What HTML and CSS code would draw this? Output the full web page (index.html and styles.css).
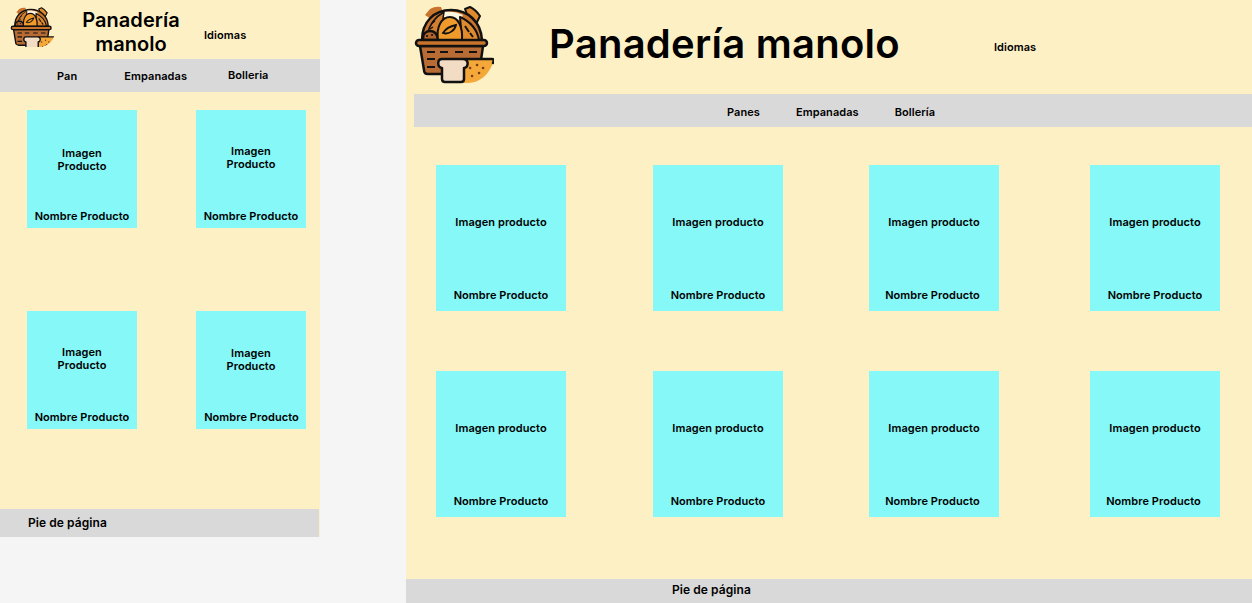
FILE: index.html
```html
<!DOCTYPE html>
<html lang="es">
<head>
    <meta charset="UTF-8">
    <title>Panadería manolo</title>
    <link rel="stylesheet" href="styles.css">
</head>
<body>
    <svg width="0" height="0">
        <symbol id="basket" viewBox="0 0 84 84">
            <path d="M15 13 L20 7 Q25 4 31 5 L34 13 L24 19Z" fill="#c9742c"/>
            <path d="M55 7 L60 5 Q66 8 70 14 L67 20 L60 20Z" fill="#e08a2e" stroke="#111" stroke-width="2" stroke-linejoin="round"/>
            <path d="M12 38 C12 20 24 8 41 8 C58 8 71 20 72 38Z" fill="#c9742c" stroke="#111" stroke-width="2.5"/>
            <path d="M34 10 C40 9 48 10 53 13 L50 18 L34 15Z" fill="#fff6e0"/>
            <path d="M17 33 C19 24 25 15 34 10 L30 36Z" fill="#d27f30" stroke="#111" stroke-width="1.5" stroke-linejoin="round"/>
            <path d="M21 22 L25 19 M20 27 L23 25" stroke="#111" stroke-width="1.5"/>
            <path d="M13 38 C12 32 16 29 20 29 C25 29 28 33 28 38Z" fill="#b5652b" stroke="#111" stroke-width="2.5"/>
            <path d="M17 34h.1M22 33h.1" stroke="#111" stroke-width="2" stroke-linecap="round"/>
            <path d="M50 15 C59 19 67 27 69 38 H52Z" fill="#e08a2e" stroke="#111" stroke-width="2" stroke-linejoin="round"/>
            <path d="M55 24 L59 30 M60 31 L63 35" stroke="#111" stroke-width="2"/>
            <path d="M28 38 C26 24 32 15 40 15 C48 15 53 25 52 38Z" fill="#f09a2c" stroke="#111" stroke-width="2"/>
            <path d="M33 31 C36 26 41 24 46 23 C45 28 39 33 33 31Z" fill="none" stroke="#111" stroke-width="1.8"/>
            <path d="M10 44 H73 L69 72 H18 C15 72 14 70 14 68Z" fill="#b86c34" stroke="#111" stroke-width="2.5" stroke-linejoin="round"/>
            <rect x="6" y="38" width="71" height="6" rx="3" fill="#c9742c" stroke="#111" stroke-width="2.5"/>
            <path d="M17 50 H25 M30 50 H38 M45 50 H53 M59 50 H67 M17 57 H25 M17 65 H25" stroke="#111" stroke-width="2.2"/>
            <path d="M55 57 H82 C84 57 84 59 83 61 C79 72 70 81 58 81 H50Z" fill="#f5a83a"/>
            <path d="M55 57 H82 C84 57 84 59 83 61" fill="none" stroke="#111" stroke-width="2.5" stroke-linecap="round"/>
            <path d="M60 66h.1M67 63h.1M73 66h.1M62 74h.1M69 71h.1" stroke="#7a3d12" stroke-width="2.5" stroke-linecap="round"/>
            <path d="M32 57 H53 C59 57 59 65 54 66 V77 C54 79 53 80 51 80 H35 C33 80 32 79 32 77 V66 C27 65 27 57 32 57Z" fill="#f2dcc4" stroke="#111" stroke-width="2.5" stroke-linejoin="round"/>
        </symbol>
    </svg>

    <div class="frame frame-mobile">
        <header class="top-mobile">
            <svg class="logo-mobile" viewBox="0 0 84 75"><use href="#basket" width="84" height="84"/></svg>
            <h1 class="title-mobile">Panadería manolo</h1>
            <span class="idiomas-mobile">Idiomas</span>
        </header>
        <nav class="nav-mobile">
            <a class="nav-pan">Pan</a>
            <a class="nav-emp">Empanadas</a>
            <a class="nav-bol">Bolleria</a>
        </nav>
        <main class="grid-mobile">
            <div class="card-mobile card-a"><p class="img-label">Imagen Producto</p><p class="name-label">Nombre Producto</p></div>
            <div class="card-mobile card-b"><p class="img-label">Imagen Producto</p><p class="name-label">Nombre Producto</p></div>
            <div class="card-mobile card-b"><p class="img-label">Imagen Producto</p><p class="name-label">Nombre Producto</p></div>
            <div class="card-mobile card-c"><p class="img-label">Imagen Producto</p><p class="name-label nudge-r">Nombre Producto</p></div>
        </main>
        <footer class="foot-mobile">Pie de página</footer>
    </div>

    <div class="frame frame-desktop">
        <header class="top-desktop">
            <svg class="logo-desktop"><use href="#basket"/></svg>
            <h1 class="title-desktop">Panadería manolo</h1>
            <span class="idiomas-desktop">Idiomas</span>
        </header>
        <nav class="nav-desktop">
            <a>Panes</a>
            <a>Empanadas</a>
            <a>Bollería</a>
        </nav>
        <main class="grid-desktop">
            <div class="card-desktop"><p class="img-label">Imagen producto</p><p class="name-label">Nombre Producto</p></div>
            <div class="card-desktop"><p class="img-label">Imagen producto</p><p class="name-label">Nombre Producto</p></div>
            <div class="card-desktop"><p class="img-label">Imagen producto</p><p class="name-label nudge-l">Nombre Producto</p></div>
            <div class="card-desktop"><p class="img-label">Imagen producto</p><p class="name-label">Nombre Producto</p></div>
            <div class="card-desktop"><p class="img-label">Imagen producto</p><p class="name-label">Nombre Producto</p></div>
            <div class="card-desktop"><p class="img-label">Imagen producto</p><p class="name-label">Nombre Producto</p></div>
            <div class="card-desktop"><p class="img-label">Imagen producto</p><p class="name-label nudge-l">Nombre Producto</p></div>
            <div class="card-desktop"><p class="img-label">Imagen producto</p><p class="name-label nudge-l">Nombre Producto</p></div>
        </main>
        <footer class="foot-desktop">Pie de página</footer>
    </div>
</body>
</html>
```

FILE: styles.css
```css
html, body {
    height: 100%;
}

body {
    font-family: Inter, Arial, sans-serif;
    font-weight: 600;
    letter-spacing: 0.07px;
    margin: 0;
    background-color: #f5f5f5;
    color: #000;
    display: flex;
    align-items: flex-start;
    overflow: hidden;
}

p, h1 {
    margin: 0;
}

.frame {
    background-color: #fef0c5;
    display: flex;
    flex-direction: column;
}

/* Telefono */
.frame-mobile {
    width: 320px;
    height: 537px;
    margin-right: 86px;
    flex-shrink: 0;
}

.top-mobile {
    height: 59px;
    display: flex;
    align-items: center;
    padding-left: 8px;
}

.logo-mobile {
    width: 47px;
    height: 42px;
    align-self: flex-start;
    margin-top: 5px;
    border-radius: 0 0 16px 16px;
    flex-shrink: 0;
}

.title-mobile {
    width: 110px;
    margin-left: 21px;
    margin-top: 4px;
    font-size: 20px;
    font-weight: 600;
    line-height: 24px;
    text-align: center;
}

.idiomas-mobile {
    font-size: 11px;
    margin-left: 18px;
    margin-top: 10px;
}

.nav-mobile {
    height: 33px;
    background-color: #d9d9d9;
    display: flex;
    align-items: center;
    font-size: 11px;
}

.nav-pan {
    margin-left: 57px;
}

.nav-emp {
    margin-left: 47px;
}

.nav-bol {
    margin-left: 41px;
    margin-bottom: 2px;
}

.grid-mobile {
    flex: 1;
    display: grid;
    grid-template-columns: 110px 110px;
    grid-auto-rows: 118px;
    column-gap: 59px;
    row-gap: 83px;
    padding: 18px 0 0 27px;
}

.card-mobile {
    background-color: #85f8f7;
    display: flex;
    flex-direction: column;
    align-items: center;
    text-align: center;
    font-size: 11px;
    line-height: 13px;
}

.card-mobile .img-label {
    width: 70px;
}

.card-a .img-label {
    margin-top: 37px;
}

.card-b .img-label {
    margin-top: 35px;
}

.card-c .img-label {
    margin-top: 36px;
}

.card-mobile .name-label {
    margin-top: auto;
    margin-bottom: 5px;
}

.foot-mobile {
    height: 28px;
    width: 319px;
    background-color: #d9d9d9;
    font-size: 12px;
    line-height: 28px;
    padding-left: 28px;
    box-sizing: border-box;
}

.nudge-r {
    margin-left: 1px;
}

/* Escritorio */
.frame-desktop {
    width: 846px;
    height: 603px;
    flex-shrink: 0;
}

.top-desktop {
    height: 94px;
    display: flex;
    align-items: center;
    padding-left: 4px;
}

.logo-desktop {
    width: 84px;
    height: 84px;
    flex-shrink: 0;
    align-self: flex-start;
    margin-top: 2px;
}

.title-desktop {
    font-size: 40px;
    font-weight: 600;
    letter-spacing: 0.25px;
    line-height: 48px;
    margin-left: 55px;
    margin-top: -6px;
}

.idiomas-desktop {
    font-size: 11px;
    margin-left: 94px;
}

.nav-desktop {
    height: 33px;
    box-sizing: border-box;
    margin-left: 8px;
    background-color: #d9d9d9;
    display: flex;
    align-items: center;
    gap: 36px;
    padding: 2px 0 0 313px;
    font-size: 11px;
}

.grid-desktop {
    flex: 1;
    display: grid;
    grid-template-columns: 217px 216px 221px 130px;
    grid-auto-rows: 146px;
    row-gap: 60px;
    padding: 38px 0 0 30px;
}

.card-desktop {
    width: 130px;
    background-color: #85f8f7;
    display: flex;
    flex-direction: column;
    align-items: center;
    font-size: 11px;
    line-height: 13px;
}

.card-desktop .img-label {
    margin-top: 51px;
}

.card-desktop .name-label {
    margin-top: auto;
    margin-bottom: 9px;
}

.nudge-l {
    margin-right: 3px;
}

.foot-desktop {
    height: 24px;
    background-color: #d9d9d9;
    font-size: 12px;
    line-height: 22px;
    padding-left: 266px;
}
```
